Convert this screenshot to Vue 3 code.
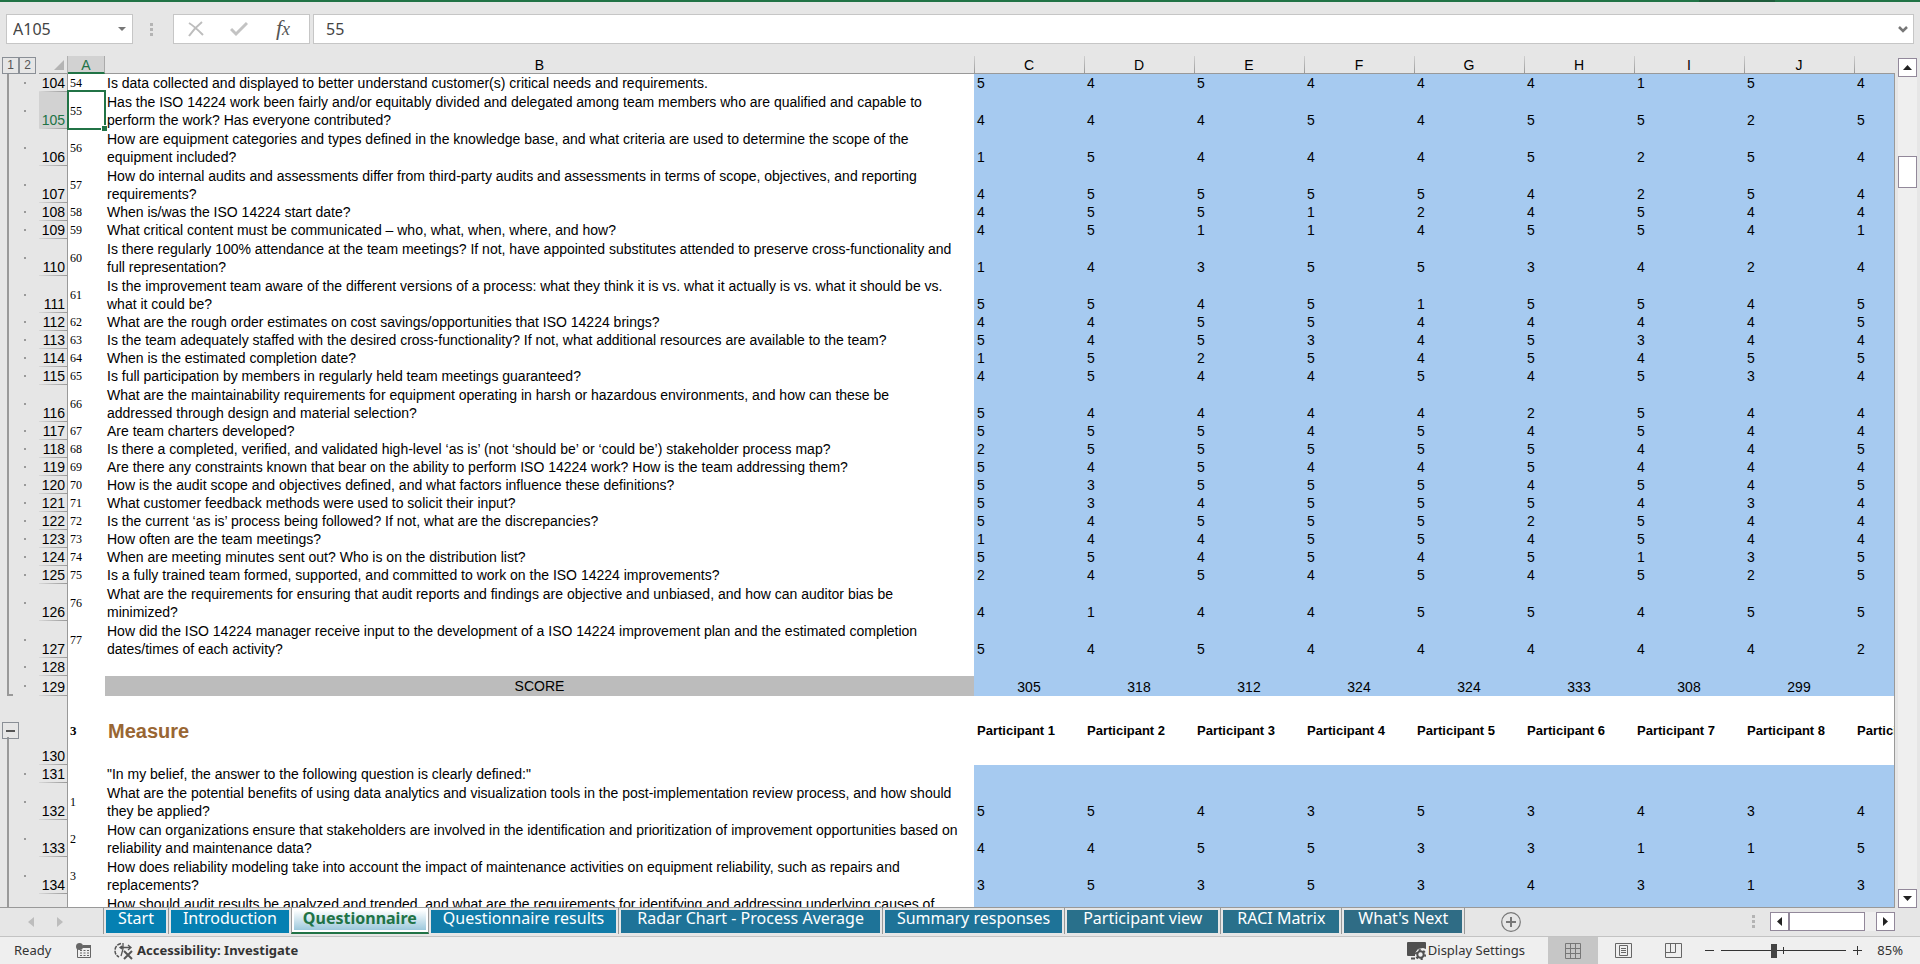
<script setup>
import { ref } from 'vue'

const nameBox = ref('A105')
const formula = ref('55')
const zoom = ref(42)
const activeTab = ref('Questionnaire')

const columns = ['C', 'D', 'E', 'F', 'G', 'H', 'I', 'J', '']

const tabs = [
  { name: 'Start', tone: 't1' },
  { name: 'Introduction', tone: 't1' },
  { name: 'Questionnaire', tone: 't1' },
  { name: 'Questionnaire results', tone: 't2' },
  { name: 'Radar Chart - Process Average', tone: 't3 roomy' },
  { name: 'Summary responses', tone: 't3' },
  { name: 'Participant view', tone: 't4 roomy' },
  { name: 'RACI Matrix', tone: 't4 medium' },
  { name: "What's Next", tone: 't5 medium' }
]

const q = (row, num, lines, scores) => ({ row, num, lines, scores: scores.split('') })

const define = [
  q(104, 54, ['Is data collected and displayed to better understand customer(s) critical needs and requirements.'], '545444154'),
  q(105, 55, ['Has the ISO 14224 work been fairly and/or equitably divided and delegated among team members who are qualified and capable to', 'perform the work? Has everyone contributed?'], '444545525'),
  q(106, 56, ['How are equipment categories and types defined in the knowledge base, and what criteria are used to determine the scope of the', 'equipment included?'], '154445254'),
  q(107, 57, ['How do internal audits and assessments differ from third-party audits and assessments in terms of scope, objectives, and reporting', 'requirements?'], '455554254'),
  q(108, 58, ['When is/was the ISO 14224 start date?'], '455124544'),
  q(109, 59, ['What critical content must be communicated – who, what, when, where, and how?'], '451145541'),
  q(110, 60, ['Is there regularly 100% attendance at the team meetings? If not, have appointed substitutes attended to preserve cross-functionality and', 'full representation?'], '143553424'),
  q(111, 61, ['Is the improvement team aware of the different versions of a process: what they think it is vs. what it actually is vs. what it should be vs.', 'what it could be?'], '554515545'),
  q(112, 62, ['What are the rough order estimates on cost savings/opportunities that ISO 14224 brings?'], '445544445'),
  q(113, 63, ['Is the team adequately staffed with the desired cross-functionality? If not, what additional resources are available to the team?'], '545345344'),
  q(114, 64, ['When is the estimated completion date?'], '152545455'),
  q(115, 65, ['Is full participation by members in regularly held team meetings guaranteed?'], '454454534'),
  q(116, 66, ['What are the maintainability requirements for equipment operating in harsh or hazardous environments, and how can these be', 'addressed through design and material selection?'], '544442544'),
  q(117, 67, ['Are team charters developed?'], '555454544'),
  q(118, 68, ['Is there a completed, verified, and validated high-level ‘as is’ (not ‘should be’ or ‘could be’) stakeholder process map?'], '255555445'),
  q(119, 69, ['Are there any constraints known that bear on the ability to perform ISO 14224 work? How is the team addressing them?'], '545445444'),
  q(120, 70, ['How is the audit scope and objectives defined, and what factors influence these definitions?'], '535554545'),
  q(121, 71, ['What customer feedback methods were used to solicit their input?'], '534555434'),
  q(122, 72, ['Is the current ‘as is’ process being followed? If not, what are the discrepancies?'], '545552544'),
  q(123, 73, ['How often are the team meetings?'], '144554544'),
  q(124, 74, ['When are meeting minutes sent out? Who is on the distribution list?'], '554545135'),
  q(125, 75, ['Is a fully trained team formed, supported, and committed to work on the ISO 14224 improvements?'], '245454525'),
  q(126, 76, ['What are the requirements for ensuring that audit reports and findings are objective and unbiased, and how can auditor bias be', 'minimized?'], '414455455'),
  q(127, 77, ['How did the ISO 14224 manager receive input to the development of a ISO 14224 improvement plan and the estimated completion', 'dates/times of each activity?'], '545444442'),
  { row: 128, num: '', lines: [''], scores: Array(9).fill('') }
]

const measure = [
  { row: 131, num: '', lines: ['"In my belief, the answer to the following question is clearly defined:"'], scores: Array(9).fill('') },
  q(132, 1, ['What are the potential benefits of using data analytics and visualization tools in the post-implementation review process, and how should', 'they be applied?'], '554353434'),
  q(133, 2, ['How can organizations ensure that stakeholders are involved in the identification and prioritization of improvement opportunities based on', 'reliability and maintenance data?'], '445533115'),
  q(134, 3, ['How does reliability modeling take into account the impact of maintenance activities on equipment reliability, such as repairs and', 'replacements?'], '353534313'),
  { row: 135, num: '', lines: ['How should audit results be analyzed and trended, and what are the requirements for identifying and addressing underlying causes of', ''], scores: Array(9).fill('') }
]

const totals = ['305', '318', '312', '324', '324', '333', '308', '299', '']
const participants = [1, 2, 3, 4, 5, 6, 7, 8, 9].map((n) => `Participant ${n}`)

const rows = [
  ...define.map((r) => ({ ...r, kind: 'item' })),
  { row: 129, num: '', lines: ['SCORE'], scores: totals, kind: 'score' },
  { row: 130, num: 3, lines: ['Measure'], scores: participants, kind: 'section' },
  ...measure.map((r) => ({ ...r, kind: 'item' }))
]
</script>

<template>
  <div class="app">
    <div class="titlebar"><span class="title-shade"></span></div>

    <div class="formula-bar">
      <div class="name-box">
        <input v-model="nameBox" class="name-input" aria-label="Name box" />
        <button class="name-drop" aria-label="Open name list">
          <svg width="8" height="4" viewBox="0 0 8 4"><path d="M0 0h8L4 4z" fill="#777" /></svg>
        </button>
      </div>
      <div class="grip grip-top"><i></i><i></i><i></i></div>
      <div class="fx-box">
        <button aria-label="Cancel">
          <svg width="16" height="16" viewBox="0 0 16 16" fill="none" stroke="#bdbdbd" stroke-width="2"><path d="M1 2c5 3 9 7 14 12M14 1C9 5 5 9 1 15" /></svg>
        </button>
        <button aria-label="Enter">
          <svg width="18" height="16" viewBox="0 0 18 16" fill="none" stroke="#c3c3c3" stroke-width="3"><path d="M1 8l5 5L17 2" /></svg>
        </button>
        <button class="fx" aria-label="Insert function"><span class="fx-f">f</span><span class="fx-x">x</span></button>
      </div>
      <div class="formula-box">
        <input v-model="formula" class="formula-input" aria-label="Formula bar" />
        <button class="expand" aria-label="Expand formula bar">
          <svg width="10" height="7" viewBox="0 0 10 7" fill="none" stroke="#777" stroke-width="2.5"><path d="M1 1l4 4 4-4" /></svg>
        </button>
      </div>
    </div>

    <div class="work">
      <div class="sheet">
        <table>
          <colgroup>
            <col class="c-outline" /><col class="c-row" /><col class="c-a" /><col class="c-b" />
            <col v-for="n in 8" :key="n" class="c-score" /><col />
          </colgroup>
          <thead>
            <tr>
              <th class="levels"><div><button>1</button><button>2</button></div></th>
              <th class="corner">
                <svg width="10" height="10" viewBox="0 0 10 10"><path d="M10 0v10H0z" fill="#b4b4b4" /></svg>
              </th>
              <th class="col-a">A</th>
              <th class="col-head">B</th>
              <th v-for="(c, i) in columns" :key="i" class="col-head split">{{ c }}</th>
            </tr>
          </thead>
          <tbody>
            <tr v-for="r in rows" :key="r.row" :class="[r.kind, { two: r.lines.length > 1, current: r.row === 105 }]">
              <td class="outline">
                <button v-if="r.kind === 'section'" class="collapse" aria-label="Collapse group">
                  <svg width="9" height="2" viewBox="0 0 9 2"><path d="M0 0h9v2H0z" fill="#555" /></svg>
                </button>
                <span v-else class="dot"></span>
              </td>
              <th class="row-head" scope="row">{{ r.row }}</th>
              <td class="num">{{ r.num }}<span v-if="r.row === 105" class="selection"><i></i></span></td>
              <td class="question"><span v-for="(l, i) in r.lines" :key="i">{{ l }}</span></td>
              <td v-for="(s, i) in r.scores" :key="i" class="score-cell">{{ s }}</td>
            </tr>
          </tbody>
        </table>
      </div>
      <div class="vscroll">
        <button class="sb-btn" aria-label="Scroll up">
          <svg width="9" height="5" viewBox="0 0 9 5"><path d="M4.500 0L9 5H0z" fill="#222" /></svg>
        </button>
        <span class="v-before"></span>
        <span class="v-thumb"></span>
        <span class="v-after"></span>
        <button class="sb-btn" aria-label="Scroll down">
          <svg width="9" height="5" viewBox="0 0 9 5"><path d="M0 0h9L4.500 5z" fill="#222" /></svg>
        </button>
      </div>
    </div>

    <div class="tabbar">
      <div class="tab-nav">
        <button aria-label="Previous sheet"><svg width="6" height="10" viewBox="0 0 6 10"><path d="M6 0v10L0 5z" fill="#bdbdbd" /></svg></button>
        <button aria-label="Next sheet"><svg width="6" height="10" viewBox="0 0 6 10"><path d="M0 0v10l6-5z" fill="#bdbdbd" /></svg></button>
      </div>
      <nav class="tabs" role="tablist">
        <div v-for="t in tabs" :key="t.name" class="tab" :class="{ active: t.name === activeTab }">
          <button role="tab" :class="t.tone" :aria-selected="t.name === activeTab" @click="activeTab = t.name">{{ t.name }}</button>
        </div>
      </nav>
      <button class="add" aria-label="New sheet">
        <svg width="20" height="20" viewBox="0 0 20 20" fill="none" stroke="#777"><circle cx="10" cy="10" r="9.300" stroke-width="1.200" /><path d="M5 10h10M10 5v10" stroke-width="2" /></svg>
      </button>
      <div class="grip grip-bottom"><i></i><i></i><i></i></div>
      <div class="hscroll">
        <button class="sb-btn" aria-label="Scroll left"><svg width="5" height="9" viewBox="0 0 5 9"><path d="M5 0v9L0 4.500z" fill="#222" /></svg></button>
        <span class="h-thumb"></span>
        <span class="h-after"></span>
        <button class="sb-btn" aria-label="Scroll right"><svg width="5" height="9" viewBox="0 0 5 9"><path d="M0 0v9l5-4.500z" fill="#222" /></svg></button>
      </div>
    </div>

    <footer class="status">
      <span class="ready">Ready</span>
      <button class="macro" aria-label="Record macro">
        <svg width="15" height="15" viewBox="0 0 15 15">
          <path d="M1.500 6v8.500h13v-12H7" fill="none" stroke="#666" />
          <path d="M7 2h8v3H6z" fill="#666" /><circle cx="3.500" cy="3.500" r="3.500" fill="#666" />
          <path d="M4 7.500h2M7.500 7.500h2M11 7.500h2M4 10h2M7.500 10h2M11 10h2M4 12.500h2M7.500 12.500h2M11 12.500h2" stroke="#666" />
        </svg>
      </button>
      <button class="access">
        <svg width="20" height="18" viewBox="0 0 20 18" fill="none" stroke="#555">
          <path d="M7 1.500C3 2.500 1 5 1 8.500s1.500 5 4 6.500" stroke-width="1.500" stroke-dasharray="4 1" />
          <path d="M9 1v6M6 5.500h11M8 4L6 5.500 8 7M14 3l3 2.500L14 8M9 7l-2 7" stroke-width="1.300" />
          <path d="M10 9l8 8M18 9l-8 8" stroke-width="2" />
        </svg>
        <span>Accessibility: Investigate</span>
      </button>
      <span class="spacer"></span>
      <button class="display">
        <svg width="19" height="19" viewBox="0 0 19 19">
          <path d="M1 1h17q1 0 1 1v6l-3-1-5 1-3 4v3H1q-1 0-1-1V2q0-1 1-1z" fill="#505050" />
          <path d="M4 17.500h4" stroke="#505050" stroke-width="2" />
          <circle cx="13.500" cy="13.500" r="3.200" fill="none" stroke="#505050" stroke-width="2" />
          <circle cx="13.500" cy="13.500" r="4.700" fill="none" stroke="#505050" stroke-width="1.800" stroke-dasharray="2.200 2.700" />
        </svg>
        <span>Display Settings</span>
      </button>
      <div class="views">
        <button class="on" aria-label="Normal view">
          <svg width="16" height="16" viewBox="0 0 16 16" fill="none" stroke="#777"><path d="M.5.5h15v15H.5zM.5 5.500h15M.5 10.500h15M5.500.5v15M10.500.5v15" /></svg>
        </button>
        <button aria-label="Page layout view">
          <svg width="17" height="16" viewBox="0 0 17 16" fill="none" stroke="#666"><path d="M.5.5h16v14H.5zM4.500 2.500h8v10h-8zM6 5.500h5M6 7.500h5M6 9.500h5" /></svg>
        </button>
        <button aria-label="Page break view">
          <svg width="17" height="16" viewBox="0 0 17 16" fill="none" stroke="#666"><path d="M.5.5h16v14H.5zM.5 9.500h10v-9M5.500.5v9" /></svg>
        </button>
      </div>
      <button class="zoom-btn" aria-label="Zoom out"><svg width="9" height="9" viewBox="0 0 9 9"><path d="M0 4.500h9" stroke="#333" /></svg></button>
      <div class="zoom-track"><input v-model="zoom" type="range" min="0" max="100" aria-label="Zoom" /></div>
      <button class="zoom-btn" aria-label="Zoom in"><svg width="9" height="9" viewBox="0 0 9 9"><path d="M0 4.500h9M4.500 0v9" stroke="#333" /></svg></button>
      <button class="percent">85%</button>
    </footer>
  </div>
</template>

<style>
body {
  margin: 0;
  background: #e6e6e6;
}
</style>

<style scoped>
* {
  box-sizing: border-box;
}
.app {
  display: flex;
  flex-direction: column;
  height: 100vh;
  overflow: hidden;
  background: #e6e6e6;
  color: #333;
  font-family: "Noto Sans", "Open Sans", sans-serif;
}
button,
input {
  margin: 0;
  padding: 0;
  border: 0;
  background: none;
  color: inherit;
  font: inherit;
  border-radius: 0;
}
button {
  display: flex;
  align-items: center;
  justify-content: center;
  white-space: nowrap;
}
svg {
  display: block;
  flex: none;
}
.titlebar {
  flex: none;
  display: flex;
  justify-content: flex-end;
  height: 2px;
  padding-right: 145px;
  background: #217346;
}
.title-shade {
  width: 76px;
  background: #1e5c3b;
}

/* formula bar */
.formula-bar {
  flex: none;
  display: flex;
  padding: 12px 6px;
  font-size: 16px;
  color: #444;
}
.name-box,
.fx-box,
.formula-box {
  display: flex;
  align-items: center;
  height: 30px;
  border: 1px solid #c6c6c6;
  background: #fff;
}
.name-box {
  width: 127px;
  padding: 0 6px;
}
.name-input {
  flex: 1;
  min-width: 0;
}
.name-drop {
  width: 8px;
}
.grip {
  display: flex;
  flex-direction: column;
  justify-content: center;
  gap: 2px;
}
.grip i {
  width: 3px;
  height: 3px;
  background: #b4b4b4;
}
.grip-top {
  margin: 0 20px 0 17px;
}
.fx-box {
  width: 137px;
  padding-right: 4px;
}
.fx-box button {
  flex: 1;
  height: 28px;
}
.fx-box button:first-child {
  flex: none;
  width: 43px;
}
.fx-box .fx {
  align-items: baseline;
  font-family: "Liberation Serif", serif;
  font-style: italic;
  line-height: 26px;
  color: #555;
}
.fx-f {
  font-size: 22px;
}
.fx-x {
  font-size: 18px;
}
.formula-box {
  flex: 1;
  margin-left: 3px;
  padding: 0 5px 0 12px;
}
.formula-input {
  flex: 1;
  min-width: 0;
}

/* sheet */
.work {
  flex: 1;
  min-height: 0;
  display: flex;
}
.sheet {
  flex: 1;
  min-width: 0;
  overflow: hidden;
  border-bottom: 1px solid #999;
}
table {
  width: 100%;
  table-layout: fixed;
  border-collapse: separate;
  border-spacing: 0;
  font: 14px/18px "Liberation Sans", Arial, sans-serif;
  color: #000;
}
.c-outline {
  width: 39px;
}
.c-row {
  width: 29px;
}
.c-a {
  width: 37px;
}
.c-b {
  width: 869px;
}
.c-score {
  width: 110px;
}
td,
th {
  padding: 0;
  font-weight: normal;
}
thead th {
  height: 18px;
  padding-top: 1px;
  line-height: 16px;
  border-bottom: 1px solid #999;
}
thead .levels {
  padding: 0;
  border-bottom: 0;
}
.levels div {
  display: flex;
  padding-left: 2px;
}
.levels button {
  width: 17px;
  height: 17px;
  border: 1px solid #8a8f96;
  font: 12px/15px "Liberation Sans", Arial, sans-serif;
  color: #555;
}
thead .corner {
  padding: 4px 3px 3px 15px;
  border-right: 1px solid #b0b0b0;
}
thead .col-a {
  padding-top: 2px;
  border-right: 1px solid #aaa;
  border-bottom: 2px solid #217346;
  background: #d2d2d2;
  color: #217346;
  line-height: 14px;
}
.split {
  background: linear-gradient(#d0d0d0, #999) 0 0 / 1px 100% no-repeat;
}
.outline {
  vertical-align: middle;
  background: linear-gradient(#999, #999) 7px 0 / 2px 100% no-repeat;
}
.dot {
  display: block;
  width: 2px;
  height: 2px;
  margin-left: 24px;
  background: #999;
}
.row-head {
  padding-right: 2px;
  border-right: 1px solid #999;
  background: linear-gradient(90deg, #d8d8d8, #999) 0 100% / 100% 1px no-repeat;
  text-align: right;
  vertical-align: bottom;
}
.current .row-head {
  background-color: #d2d2d2;
  color: #217346;
}
tbody td {
  height: 18px;
}
.two td {
  height: 37px;
}
.num {
  position: relative;
  padding-left: 2px;
  background: #fff;
  font-family: "Liberation Serif", "Times New Roman", serif;
  font-size: 12px;
}
.selection {
  position: absolute;
  z-index: 1;
  inset: -2px -1px -1px -1px;
  border: 2px solid #217346;
}
.selection i {
  position: absolute;
  right: -3px;
  bottom: -3px;
  width: 6px;
  height: 6px;
  border: 1px solid #fff;
  border-width: 1px 0 0 1px;
  background: #217346;
}
.question {
  padding-left: 2px;
  background: #fff;
  vertical-align: bottom;
  white-space: nowrap;
}
.question span {
  display: block;
  min-height: 18px;
}
.score-cell {
  padding-left: 3px;
  overflow: hidden;
  background: #a6caf0;
  vertical-align: bottom;
  white-space: nowrap;
}
.score-cell:last-child {
  border-right: 1px solid #999;
}
.score td {
  height: 20px;
}
.score .outline {
  background:
    linear-gradient(#999, #999) 7px 0 / 2px 19px no-repeat,
    linear-gradient(#999, #999) 7px 18px / 6px 2px no-repeat;
}
.score .question {
  padding: 0;
  background: #bcbcbc;
  text-align: center;
  vertical-align: middle;
}
.score .score-cell {
  padding: 0;
  text-align: center;
}
.section td {
  height: 69px;
}
.section .outline {
  background: linear-gradient(#999, #999) 7px 100% / 2px 28px no-repeat;
}
.collapse {
  width: 17px;
  height: 17px;
  margin-left: 2px;
  border: 1px solid #8a8f96;
}
.section .num {
  font-size: 13px;
  font-weight: bold;
}
.section .question {
  padding-left: 3px;
  font-size: 20px;
  font-weight: bold;
  color: #996633;
  vertical-align: middle;
}
.section .score-cell {
  background: #fff;
  font-size: 13px;
  font-weight: bold;
  vertical-align: middle;
}

/* scrollbars */
.sb-btn {
  flex: none;
  width: 19px;
  height: 19px;
  border: 1px solid #92889a;
  background: #fff;
}
.vscroll {
  flex: none;
  display: flex;
  flex-direction: column;
  width: 19px;
  margin: 2px 3px 0 3px;
  background: #efefef;
}
.v-before {
  flex: 79;
}
.v-thumb {
  height: 32px;
  border: 1px solid #92889a;
  background: #fff;
}
.v-after {
  flex: 701;
}
.hscroll {
  display: flex;
  width: 125px;
  margin-right: 25px;
  background: #efefef;
}
.h-thumb {
  width: 76px;
  border: 1px solid #92889a;
  background: #fff;
}
.h-after {
  flex: 1;
}

/* sheet tabs */
.tabbar {
  flex: none;
  display: flex;
  align-items: center;
  height: 29px;
  padding-bottom: 1px;
  border-bottom: 1px solid #c3c3c3;
}
.tab-nav {
  display: flex;
  gap: 23px;
  width: 103px;
  padding-left: 28px;
}
.tabs {
  align-self: flex-start;
  display: flex;
  height: 26px;
  border-right: 1px solid #999;
  font-size: 16px;
}
.tab {
  padding: 2px 2px 0;
  border-left: 1px solid #999;
}
.tab button {
  height: 23px;
  padding: 0 12px 6px;
  color: #fff;
  line-height: 17px;
}
.tab .medium {
  padding: 0 14px 6px;
}
.tab .roomy {
  padding: 0 16px 6px;
}
.t1 {
  background: #0580b2;
}
.t2 {
  background: #107ba8;
}
.t3 {
  background: #1e7398;
}
.t4 {
  background: #29708b;
}
.t5 {
  background: #2f6c85;
}
.tab.active {
  border-right: 1px solid #999;
  border-bottom: 2px solid #217346;
  background: #fff;
}
.tab.active + .tab {
  border-left: 0;
}
.tab.active button {
  height: 20px;
  padding: 0 9px 4px;
  background: linear-gradient(#fff, #9cc8dc);
  color: #217346;
  font-weight: bold;
}
.add {
  margin-left: 36px;
}
.grip-bottom {
  margin: 0 15px 0 auto;
}

/* status bar */
.status {
  flex: none;
  display: flex;
  align-items: center;
  height: 27px;
  padding-right: 17px;
  background: #efefef;
  font-size: 13px;
  line-height: 16px;
}
.status > .ready,
.access span,
.display span,
.percent {
  padding-bottom: 2px;
}
.ready {
  width: 76px;
  padding-left: 14px;
}
.access {
  margin-left: 23px;
  gap: 3px;
  font-weight: bold;
}
.spacer {
  flex: 1;
}
.display {
  gap: 2px;
  margin-right: 23px;
}
.views {
  display: flex;
  align-self: stretch;
}
.views button {
  width: 50px;
}
.views .on {
  background: #c6c6c6;
}
.zoom-btn {
  width: 23px;
  height: 27px;
}
.zoom-track {
  display: flex;
  align-items: center;
  width: 125px;
  height: 14px;
  background:
    linear-gradient(#333, #333) 0 50% / 100% 1px no-repeat,
    linear-gradient(#333, #333) 50% 50% / 1px 7px no-repeat;
}
.zoom-track input {
  width: 100%;
  height: 14px;
  appearance: none;
}
.zoom-track input::-webkit-slider-thumb {
  appearance: none;
  width: 6px;
  height: 14px;
  background: #444;
}
.percent {
  width: 34px;
  justify-content: flex-end;
}
</style>
